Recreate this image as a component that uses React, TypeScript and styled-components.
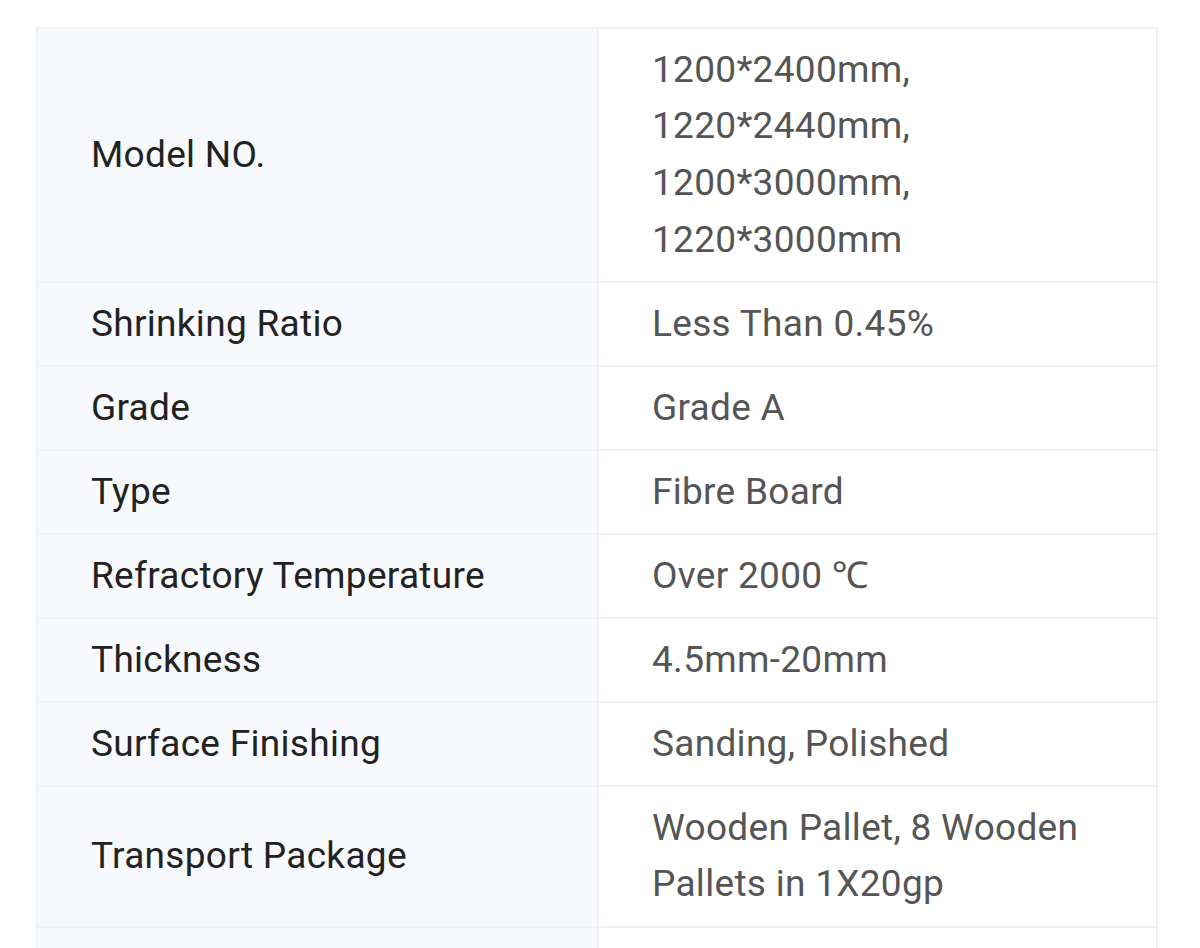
import React from "react";
import styled, { createGlobalStyle } from "styled-components";

const Global = createGlobalStyle`
  html, body { margin: 0; padding: 0; background: #ffffff; }
  body { overflow: hidden; font-family: Roboto, "Noto Sans", "Liberation Sans", sans-serif; }
`;

const Page = styled.div`
  padding: 27px 41px 0 36px;
`;

const Table = styled.table`
  width: 1122px;
  border-collapse: collapse;
  table-layout: fixed;
`;

const cellBase = `
  box-sizing: border-box;
  border: 2px solid #eef1f6;
  padding: 12.67px 40px 12.67px 53px;
  text-align: left;
  font-weight: 400;
  font-size: 37px;
  letter-spacing: 0.3px;
  line-height: 56.67px;
  vertical-align: middle;
`;

const LabelCell = styled.th`
  ${cellBase}
  width: 561px;
  background: #f7f9fc;
  color: #222222;
`;

const ValueCell = styled.td`
  ${cellBase}
  background: #ffffff;
  color: #555555;
`;

const Row = styled.tr<{ $empty?: boolean }>`
  height: ${(p) => (p.$empty ? "84px" : "auto")};
`;

const rows: [string, React.ReactNode][] = [
  [
    "Model NO.",
    <>
      1200*2400mm,
      <br />
      1220*2440mm,
      <br />
      1200*3000mm,
      <br />
      1220*3000mm
    </>,
  ],
  ["Shrinking Ratio", "Less Than 0.45%"],
  ["Grade", "Grade A"],
  ["Type", "Fibre Board"],
  ["Refractory Temperature", "Over 2000 ℃"],
  ["Thickness", "4.5mm-20mm"],
  ["Surface Finishing", "Sanding, Polished"],
  [
    "Transport Package",
    <>
      Wooden Pallet, 8 Wooden
      <br />
      Pallets in 1X20gp
    </>,
  ],
];

export default function App() {
  return (
    <>
      <Global />
      <Page>
        <Table>
          <tbody>
            {rows.map(([label, value]) => (
              <Row key={label}>
                <LabelCell scope="row">{label}</LabelCell>
                <ValueCell>{value}</ValueCell>
              </Row>
            ))}
            <Row $empty>
              <LabelCell scope="row" />
              <ValueCell />
            </Row>
          </tbody>
        </Table>
      </Page>
    </>
  );
}
